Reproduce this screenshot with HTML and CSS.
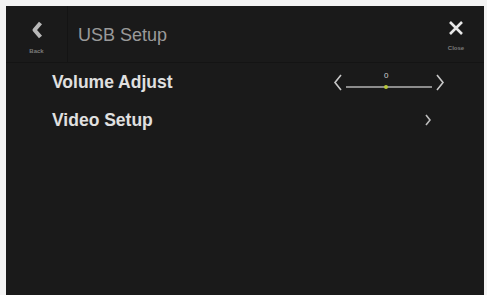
FILE: index.html
```html
<!DOCTYPE html>
<html lang="en">

<head>
	<meta charset="UTF-8" />
	<meta name="viewport" content="width=device-width, initial-scale=1.0" />
	<title>USB Setup</title>
	<link rel="stylesheet" href="styles.css">
</head>

<body>
	<div class="screen">
		<div class="header">
			<div class="back">
				<svg width="14" height="18" viewBox="0 0 14 18">
					<path d="M10.5 2 L4.5 9 L10.5 16" fill="none" stroke="#b8b8b8" stroke-width="4" stroke-linejoin="round" />
				</svg>
				<span class="tiny">Back</span>
			</div>
			<p class="title">USB Setup</p>
			<div class="close">
				<svg width="16" height="16" viewBox="0 0 16 16">
					<path d="M2 2 L14 14 M14 2 L2 14" stroke="#e8e8e8" stroke-width="2.6" />
				</svg>
				<span class="tiny">Close</span>
			</div>
		</div>
		<div class="list">
			<div class="row">
				<span class="label">Volume Adjust</span>
				<div class="slider">
					<svg class="arrow" width="10" height="17" viewBox="0 0 10 17">
						<path d="M8 1 L2 8.5 L8 16" fill="none" stroke="#c8c8c8" stroke-width="1.6" />
					</svg>
					<div class="track">
						<span class="value">0</span>
						<span class="dot"></span>
					</div>
					<svg class="arrow" width="10" height="17" viewBox="0 0 10 17">
						<path d="M2 1 L8 8.5 L2 16" fill="none" stroke="#c8c8c8" stroke-width="1.6" />
					</svg>
				</div>
			</div>
			<div class="row">
				<span class="label">Video Setup</span>
				<svg class="more" width="6" height="12" viewBox="0 0 6 12">
					<path d="M1 1 L5 6 L1 11" fill="none" stroke="#bdbdbd" stroke-width="1.6" />
				</svg>
			</div>
		</div>
	</div>
</body>

</html>
```

FILE: styles.css
```css
body {
	margin: 0;
	background-color: #f4f4f4;
	font-family: "Liberation Sans", Arial, sans-serif;
	height: 295px;
	overflow: hidden;
}

.screen {
	margin: 6px 3px 0 6px;
	height: 289px;
	background-color: #1a1a1a;
	display: flex;
	flex-direction: column;
}

.header {
	height: 56px;
	display: flex;
	align-items: stretch;
	border-bottom: 1px solid #141414;
}

.back {
	width: 62px;
	border-right: 1px solid #141414;
	display: flex;
	flex-direction: column;
	align-items: center;
	padding-top: 15px;
	box-sizing: border-box;
}

.tiny {
	font-size: 6px;
	font-weight: bold;
	color: #7a7a7a;
	margin-top: 9px;
}

.title {
	flex: 1;
	margin: 0;
	padding-left: 10px;
	padding-top: 19px;
	font-size: 18px;
	color: #9a9a9a;
}

.close {
	width: 40px;
	margin-right: 8px;
	display: flex;
	flex-direction: column;
	align-items: center;
	padding-top: 14px;
	box-sizing: border-box;
}

.close .tiny {
	margin-top: 9px;
}

.list {
	display: flex;
	flex-direction: column;
	padding-left: 46px;
	padding-right: 47px;
}

.row {
	height: 38px;
	display: flex;
	align-items: center;
	justify-content: space-between;
}

.label {
	font-size: 17.5px;
	font-weight: bold;
	color: #e0e0e0;
}

.slider {
	display: flex;
	align-items: center;
	gap: 3px;
	margin-right: -8px;
}

.track {
	position: relative;
	width: 86px;
	height: 2px;
	background-color: #8c8c8c;
	margin-top: 10px;
}

.value {
	position: absolute;
	left: 38px;
	top: -15px;
	font-size: 8px;
	color: #d0d0d0;
}

.dot {
	position: absolute;
	left: 38px;
	top: -1px;
	width: 4px;
	height: 4px;
	border-radius: 50%;
	background-color: #b8c83a;
}

.more {
	margin-right: 6px;
}
```
